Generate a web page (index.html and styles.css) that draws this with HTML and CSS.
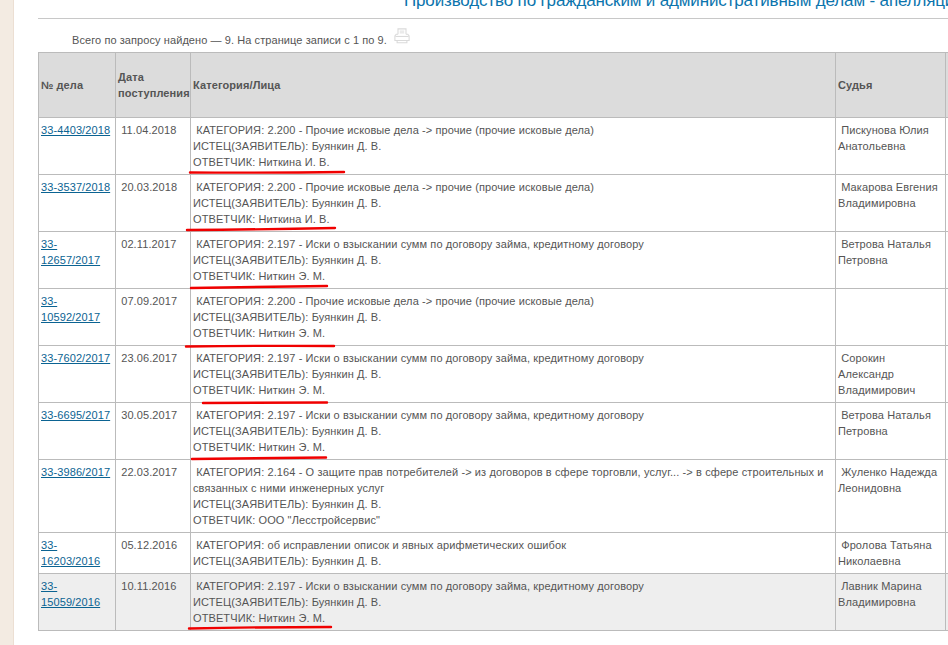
FILE: index.html
```html
<!DOCTYPE html>
<html lang="ru">
<head>
<meta charset="utf-8">
<title>Производство по гражданским и административным делам</title>
<link rel="stylesheet" href="styles.css">
</head>
<body>
<div class="page">
  <aside class="side"></aside>
  <main class="main">
    <h1 class="title">Производство по гражданским и административным делам - апелляция</h1>
    <hr class="rule">
    <div class="info">
      <span>Всего по запросу найдено — 9. На странице записи с 1 по 9.</span>
      <svg class="printer" width="16" height="16" viewBox="0 0 18 18" fill="none" stroke="#dadada" stroke-width="1.2">
        <path d="M4.5 7V1h9v6"/>
        <path d="M6.5 3.5h5M6.5 5.5h5" stroke-width="1"/>
        <path d="M4.5 7H2.5L1 9v5h16V9l-1.500-2h-2"/>
        <path d="M1.500 9.500h15" />
        <path d="M3.500 14v2.500h11V14" />
      </svg>
    </div>
    <table class="cases">
      <colgroup>
        <col class="c-num"><col class="c-date"><col class="c-cat"><col class="c-judge"><col class="c-rest">
      </colgroup>
      <thead>
        <tr><th>№ дела</th><th>Дата поступления</th><th>Категория/Лица</th><th>Судья</th><th class="clip">Т</th></tr>
      </thead>
      <tbody>
        <tr>
          <td><a href="#">33-4403/2018</a></td><td>&nbsp;11.04.2018</td>
          <td>&nbsp;КАТЕГОРИЯ: 2.200 - Прочие исковые дела -&gt; прочие (прочие исковые дела)<br>ИСТЕЦ(ЗАЯВИТЕЛЬ): Буянкин Д. В.<br>ОТВЕТЧИК: Ниткина И. В.</td>
          <td>&nbsp;Пискунова Юлия Анатольевна</td><td></td>
        </tr>
        <tr>
          <td><a href="#">33-3537/2018</a></td><td>&nbsp;20.03.2018</td>
          <td>&nbsp;КАТЕГОРИЯ: 2.200 - Прочие исковые дела -&gt; прочие (прочие исковые дела)<br>ИСТЕЦ(ЗАЯВИТЕЛЬ): Буянкин Д. В.<br>ОТВЕТЧИК: Ниткина И. В.</td>
          <td>&nbsp;Макарова Евгения Владимировна</td><td></td>
        </tr>
        <tr>
          <td><a href="#">33-12657/2017</a></td><td>&nbsp;02.11.2017</td>
          <td>&nbsp;КАТЕГОРИЯ: 2.197 - Иски о взыскании сумм по договору займа, кредитному договору<br>ИСТЕЦ(ЗАЯВИТЕЛЬ): Буянкин Д. В.<br>ОТВЕТЧИК: Ниткин Э. М.</td>
          <td>&nbsp;Ветрова Наталья Петровна</td><td></td>
        </tr>
        <tr>
          <td><a href="#">33-10592/2017</a></td><td>&nbsp;07.09.2017</td>
          <td>&nbsp;КАТЕГОРИЯ: 2.200 - Прочие исковые дела -&gt; прочие (прочие исковые дела)<br>ИСТЕЦ(ЗАЯВИТЕЛЬ): Буянкин Д. В.<br>ОТВЕТЧИК: Ниткин Э. М.</td>
          <td></td><td></td>
        </tr>
        <tr>
          <td><a href="#">33-7602/2017</a></td><td>&nbsp;23.06.2017</td>
          <td>&nbsp;КАТЕГОРИЯ: 2.197 - Иски о взыскании сумм по договору займа, кредитному договору<br>ИСТЕЦ(ЗАЯВИТЕЛЬ): Буянкин Д. В.<br>ОТВЕТЧИК: Ниткин Э. М.</td>
          <td>&nbsp;Сорокин Александр Владимирович</td><td></td>
        </tr>
        <tr>
          <td><a href="#">33-6695/2017</a></td><td>&nbsp;30.05.2017</td>
          <td>&nbsp;КАТЕГОРИЯ: 2.197 - Иски о взыскании сумм по договору займа, кредитному договору<br>ИСТЕЦ(ЗАЯВИТЕЛЬ): Буянкин Д. В.<br>ОТВЕТЧИК: Ниткин Э. М.</td>
          <td>&nbsp;Ветрова Наталья Петровна</td><td></td>
        </tr>
        <tr>
          <td><a href="#">33-3986/2017</a></td><td>&nbsp;22.03.2017</td>
          <td>&nbsp;КАТЕГОРИЯ: 2.164 - О защите прав потребителей -&gt; из договоров в сфере торговли, услуг... -&gt; в сфере строительных и связанных с ними инженерных услуг<br>ИСТЕЦ(ЗАЯВИТЕЛЬ): Буянкин Д. В.<br>ОТВЕТЧИК: ООО "Лесстройсервис"</td>
          <td>&nbsp;Жуленко Надежда Леонидовна</td><td></td>
        </tr>
        <tr>
          <td><a href="#">33-16203/2016</a></td><td>&nbsp;05.12.2016</td>
          <td>&nbsp;КАТЕГОРИЯ: об исправлении описок и явных арифметических ошибок<br>ИСТЕЦ(ЗАЯВИТЕЛЬ): Буянкин Д. В.</td>
          <td>&nbsp;Фролова Татьяна Николаевна</td><td></td>
        </tr>
        <tr class="last">
          <td><a href="#">33-15059/2016</a></td><td>&nbsp;10.11.2016</td>
          <td>&nbsp;КАТЕГОРИЯ: 2.197 - Иски о взыскании сумм по договору займа, кредитному договору<br>ИСТЕЦ(ЗАЯВИТЕЛЬ): Буянкин Д. В.<br>ОТВЕТЧИК: Ниткин Э. М.</td>
          <td>&nbsp;Лавник Марина Владимировна</td><td></td>
        </tr>
      </tbody>
    </table>
  </main>
  <svg class="marks" width="948" height="645" viewBox="0 0 948 645" fill="none" stroke="#f00000" stroke-width="2.400" stroke-linecap="round">
    <path d="M190 172.500Q265 173 344 172"/>
    <path d="M187 230Q260 229.500 335 228"/>
    <path d="M191 288Q260 287 327 286"/>
    <path d="M186 346.500Q260 345.500 334 346"/>
    <path d="M203 403Q265 402.500 327 402.500"/>
    <path d="M192 459Q260 458 326 457.500"/>
    <path d="M189 628.500Q260 627 331 627"/>
  </svg>
</div>
</body>
</html>
```
FILE: styles.css
```css
* { box-sizing: border-box; }
html, body { margin: 0; padding: 0; background: #fff; }
body { font-family: "Liberation Sans", Arial, sans-serif; font-size: 11px; color: #555; overflow: hidden; }
.page { position: relative; display: flex; width: 948px; height: 645px; overflow: hidden; }
.side { flex: 0 0 14px; background: #f3ebe2; border-right: 1px solid #ecdfd3; }
.main { flex: 1; min-width: 0; padding-left: 24px; overflow: hidden; }
.title { margin: -9px 0 0 366px; font-size: 17px; letter-spacing: -0.15px; line-height: 20px; height: 20px; font-weight: normal; color: #0b74ad; white-space: nowrap; }
.rule { margin: 7px 0 0; height: 1px; border: 0; background: #c8c8c8; }
.info { display: flex; align-items: flex-start; height: 33px; padding: 9px 0 0 34px; gap: 7px; line-height: 24px; letter-spacing: 0.08px; }
.printer { flex: none; }
.cases { border-collapse: collapse; table-layout: fixed; width: 1000px; letter-spacing: 0.105px; }
.c-num { width: 77px; }
.c-date { width: 75px; }
.c-cat { width: 645px; }
.c-judge { width: 110px; }
th, td { border: 1px solid #bbb; padding: 4px 2px 4px 2px; line-height: 16px; text-align: left; vertical-align: top; font-weight: normal; }
th { height: 65px; background: #dcdcdc; font-weight: bold; vertical-align: middle; color: #555; }
.clip { color: #a8854f; }
.last td { background: #eee; }
a { color: #0b6392; text-decoration: underline; }
.marks { position: absolute; left: 0; top: 0; pointer-events: none; }
```
